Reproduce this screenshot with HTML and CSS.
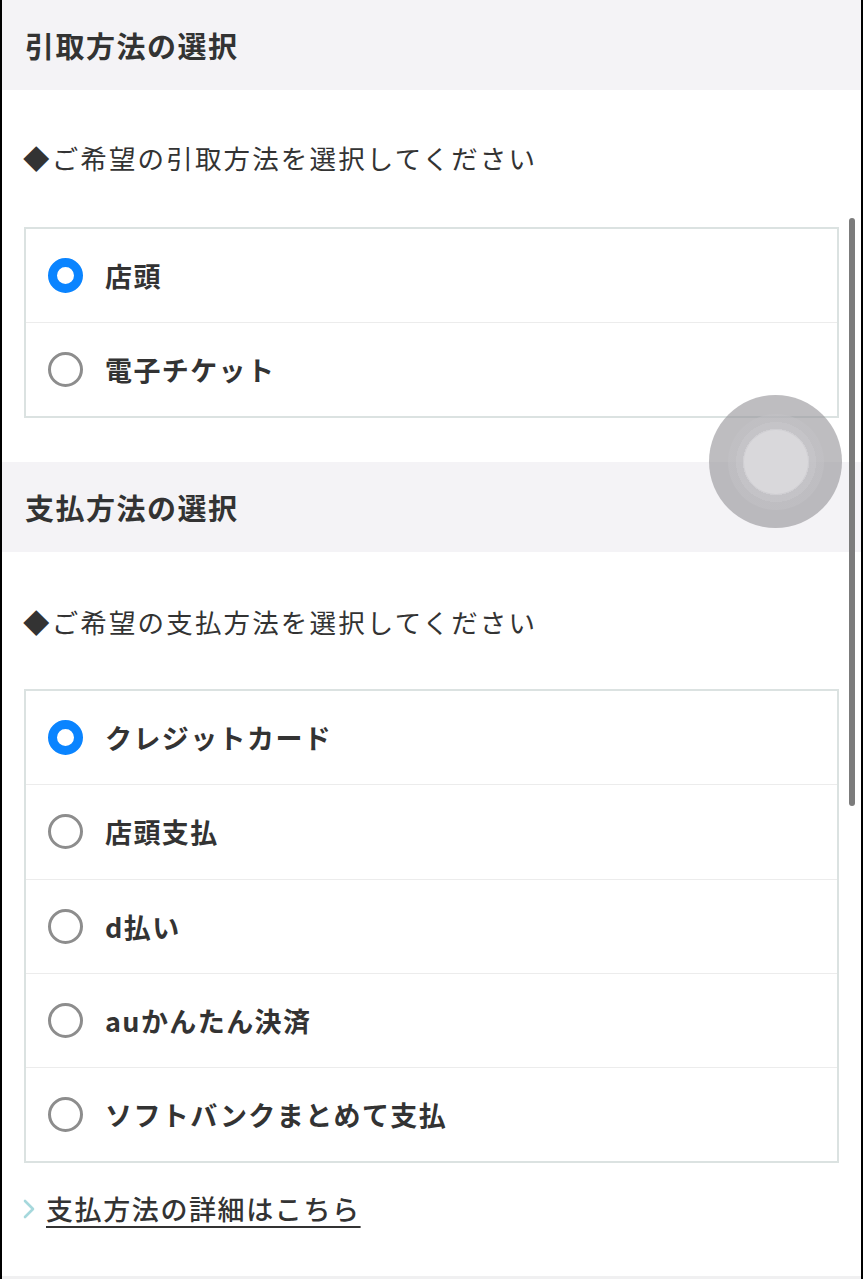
FILE: index.html
```html
<!DOCTYPE html>
<html lang="ja">
<head>
<meta charset="utf-8">
<title>引取方法の選択</title>
<link rel="stylesheet" href="styles.css">
</head>
<body>
<div class="page">
  <section class="section">
    <h2 class="sec-head">引取方法の選択</h2>
    <p class="lead">◆ご希望の引取方法を選択してください</p>
    <div class="options">
      <label class="opt"><span class="radio on"></span><span class="opt-label">店頭</span></label>
      <label class="opt"><span class="radio"></span><span class="opt-label">電子チケット</span></label>
    </div>
  </section>
  <section class="section second">
    <h2 class="sec-head">支払方法の選択</h2>
    <p class="lead">◆ご希望の支払方法を選択してください</p>
    <div class="options big">
      <label class="opt"><span class="radio on"></span><span class="opt-label">クレジットカード</span></label>
      <label class="opt"><span class="radio"></span><span class="opt-label">店頭支払</span></label>
      <label class="opt"><span class="radio"></span><span class="opt-label">d払い</span></label>
      <label class="opt"><span class="radio"></span><span class="opt-label">auかんたん決済</span></label>
      <label class="opt"><span class="radio"></span><span class="opt-label">ソフトバンクまとめて支払</span></label>
    </div>
    <a class="more" href="#">
      <svg class="chev" width="14" height="22" viewBox="0 0 14 22"><polyline points="3,3 11,11 3,19" fill="none" stroke="#a6d8dc" stroke-width="2.6" stroke-linecap="round" stroke-linejoin="round"/></svg>
      <span class="more-text">支払方法の詳細はこちら</span>
    </a>
  </section>
  <div class="next"></div>
  <div class="scrollbar"></div>
  <div class="touch"><div class="touch-ring"><div class="touch-core"></div></div></div>
</div>
</body>
</html>
```
FILE: styles.css
```css
html, body {
  margin: 0;
  padding: 0;
  background: #000;
}
body {
  font-family: "Noto Sans CJK JP", "Noto Sans", sans-serif;
  color: #333;
}
.page {
  position: relative;
  margin: 0 2px 0 2px;
  width: 859px;
  height: 1279px;
  background: #fff;
  overflow: hidden;
}
.sec-head {
  margin: 0;
  height: 90px;
  display: flex;
  align-items: center;
  padding-left: 23px;
  background: #f4f3f6;
  font-size: 29px;
  font-weight: 700;
  color: #333;
  letter-spacing: 1.5px;
}
.lead {
  margin: 0;
  padding: 50px 0 0 21px;
  line-height: 36px;
  font-size: 26.5px;
  letter-spacing: 2.15px;
  color: #333;
}
.options {
  margin: 51px 22px 0 22px;
  border: 2px solid #dbe2e1;
}
.opt {
  display: flex;
  align-items: center;
  height: 93px;
  border-top: 1px solid #ececec;
  padding-left: 22px;
}
.opt:first-child {
  border-top: none;
}
.options.big .opt {
  height: 93.3px;
}
.radio {
  box-sizing: border-box;
  width: 35px;
  height: 35px;
  border-radius: 50%;
  border: 3px solid #8d8d8d;
  background: #fff;
  flex: none;
}
.radio.on {
  border: 9px solid #0a84ff;
}
.opt-label {
  margin-left: 22px;
  font-size: 27px;
  font-weight: 700;
  letter-spacing: 1.4px;
  color: #333;
}
.second {
  margin-top: 44px;
}
.second .lead {
  padding-top: 52px;
}
.second .options {
  margin-top: 49px;
}
.more {
  display: flex;
  align-items: center;
  margin: 24px 0 0 20px;
  color: #333;
  text-decoration: none;
}
.chev {
  flex: none;
}
.more-text {
  margin-left: 10px;
  font-size: 27px;
  font-weight: 500;
  letter-spacing: 1.6px;
  line-height: 44px;
  text-decoration: underline;
  text-decoration-thickness: 2px;
  text-underline-offset: 6px;
  color: #333;
}
.next {
  position: absolute;
  left: 0;
  right: 0;
  top: 1276px;
  height: 3px;
  background: #f0f0f1;
}
.scrollbar {
  position: absolute;
  left: 847px;
  top: 218px;
  width: 6px;
  height: 588px;
  border-radius: 3px;
  background: #7c7c7c;
}
.touch {
  position: absolute;
  left: 707px;
  top: 395px;
  width: 133px;
  height: 133px;
  border-radius: 50%;
  background: rgba(150, 149, 154, 0.62);
  display: flex;
  align-items: center;
  justify-content: center;
}
.touch-ring {
  width: 96px;
  height: 96px;
  border-radius: 50%;
  background: radial-gradient(circle, rgba(210,209,213,0.9) 0 33px, rgba(200,199,203,0.7) 33px 40px, rgba(195,194,198,0.5) 40px 48px);
  display: flex;
  align-items: center;
  justify-content: center;
}
.touch-core {
  width: 64px;
  height: 64px;
  border-radius: 50%;
  background: #d9d8db;
}
```
